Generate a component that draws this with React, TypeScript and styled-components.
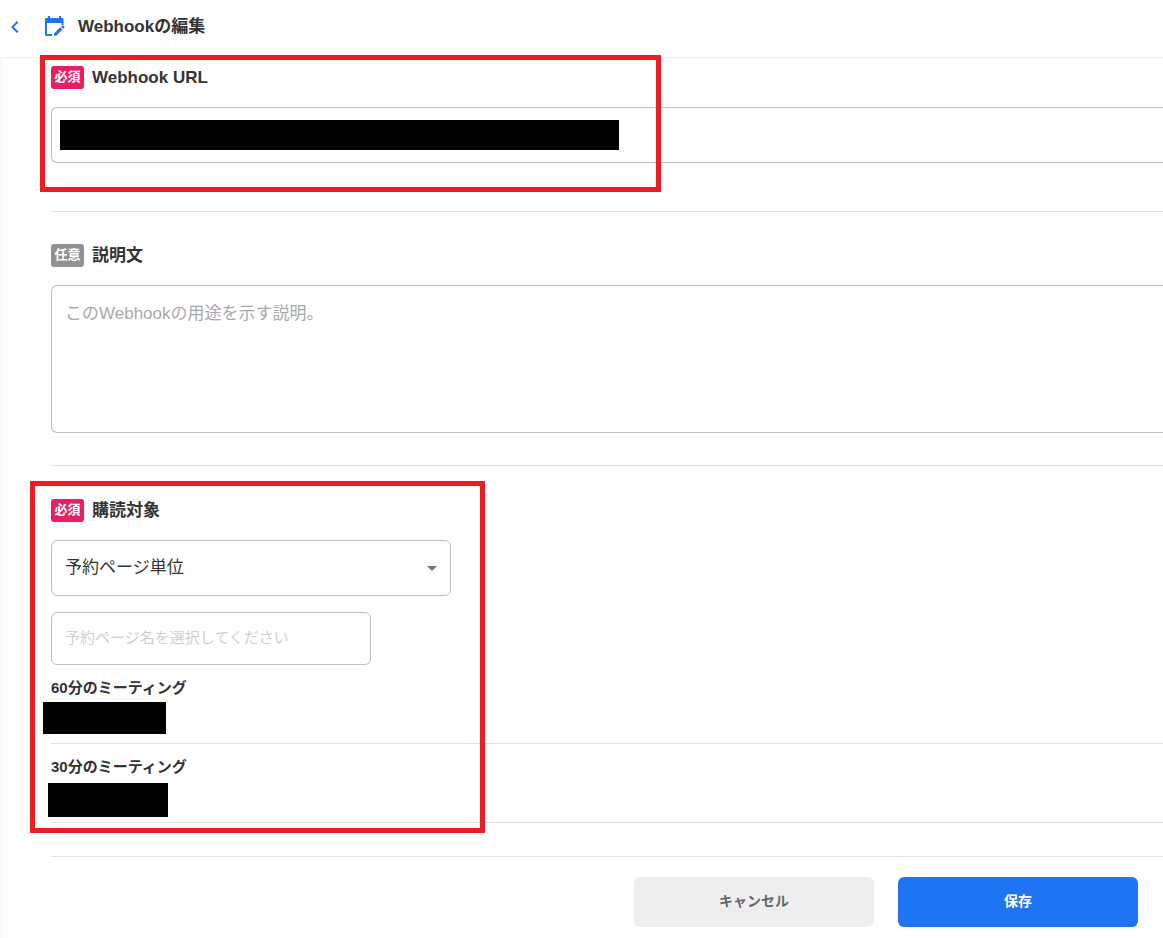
import React from 'react';
import styled, { createGlobalStyle, css } from 'styled-components';
import { MdArrowDropDown, MdChevronLeft } from 'react-icons/md';

const GlobalStyle = createGlobalStyle`
  *, *::before, *::after { box-sizing: border-box; }
  body {
    margin: 0;
    background: #fff;
    color: #333;
    font-family: "Liberation Sans", "Noto Sans CJK JP", sans-serif;
    font-size: 17px;
    line-height: 24px;
  }
  button, input, select, textarea { font: inherit; color: inherit; }
`;

const Page = styled.div`
  display: flex;
  flex-direction: column;
  min-height: 100vh;
  overflow-x: hidden;
`;

const Header = styled.header`
  display: flex;
  align-items: center;
  height: 58px;
  padding: 0 3px 4px;
  border-bottom: 1px solid #eee;
  color: #1f74f2;
`;

const BackButton = styled.button`
  display: flex;
  margin: 0 18px 0 0;
  padding: 0;
  border: 0;
  background: none;
  color: #1f74f2;
  cursor: pointer;
`;

const Title = styled.h1`
  margin: 0 0 0 12px;
  color: #333;
  font-size: 17px;
  line-height: 24px;
`;

const Form = styled.form`
  flex: 1;
  padding-left: 48px;
  border-left: 3px solid #f8f9fe;
`;

const Section = styled.section<{ $top: number; $bottom: number }>`
  position: relative;
  display: flex;
  flex-direction: column;
  padding: ${(p) => p.$top}px 0 ${(p) => p.$bottom}px;
  border-bottom: 1px solid #e4e4e4;
`;

const LabelRow = styled.div`
  display: flex;
  align-items: flex-start;
  gap: 8px;
  height: 24px;
  margin-bottom: 17px;
`;

const Badge = styled.span<{ $required?: boolean }>`
  width: 33px;
  padding-bottom: 2px;
  border-radius: 3px;
  background: ${(p) => (p.$required ? '#e91e63' : '#919191')};
  color: #fff;
  font-size: 13px;
  font-weight: 700;
  line-height: 21px;
  text-align: center;
`;

const Label = styled.label`
  font-weight: 700;
  line-height: 23px;
`;

const box = css`
  display: block;
  margin: 0;
  border: 1px solid #bfbfbf;
  border-radius: 6px;
  background: #fff;
  outline: none;
`;

const wideBox = css`
  ${box}
  width: 100%;
  border-right: 0;
  border-radius: 6px 0 0 6px;
`;

const UrlField = styled.div`
  position: relative;
`;

const UrlInput = styled.input`
  ${wideBox}
  height: 56px;
  padding: 0 13px;
`;

const Description = styled.textarea`
  ${wideBox}
  height: 148px;
  padding: 16px 13px;
  resize: none;
  &::placeholder { color: #a9a9a9; opacity: 1; }
`;

const SelectField = styled.div`
  position: relative;
  width: 400px;
  max-width: 100%;
  margin-bottom: 16px;

  svg {
    position: absolute;
    top: 16px;
    right: 7px;
    color: #757575;
    pointer-events: none;
  }
`;

const Select = styled.select`
  ${box}
  width: 100%;
  height: 56px;
  padding: 0 32px 0 13px;
  appearance: none;
`;

const PageInput = styled.input`
  ${box}
  width: 320px;
  max-width: 100%;
  height: 53px;
  padding: 0 13px 2px;
  font-size: 15px;
  &::placeholder { color: #cfcfcf; opacity: 1; }
`;

const MeetingList = styled.ul`
  margin: 0;
  padding: 0;
  list-style: none;
`;

const Meeting = styled.li`
  position: relative;
  height: 79px;
  padding-top: 12px;
  border-bottom: 1px solid #e2e2e2;
  font-size: 15px;
  font-weight: 700;
  line-height: 22px;
`;

type Rect = { $left: number; $top: number; $width: number; $height: number };

const Overlay = styled.div<Rect>`
  position: absolute;
  left: ${(p) => p.$left}px;
  top: ${(p) => p.$top}px;
  width: ${(p) => p.$width}px;
  height: ${(p) => p.$height}px;
  pointer-events: none;
`;

const Redaction = styled(Overlay)`
  background: #000;
`;

const Highlight = styled(Overlay)`
  border: 5px solid #ee1c25;
`;

const Actions = styled.div`
  display: flex;
  justify-content: flex-end;
  gap: 24px;
  padding: 20px 25px 11px 0;
`;

const ActionButton = styled.button<{ $primary?: boolean }>`
  width: 240px;
  height: 50px;
  padding: 0 0 2px;
  border: 0;
  border-radius: 6px;
  background: ${(p) => (p.$primary ? '#1f74f2' : '#eee')};
  color: ${(p) => (p.$primary ? '#fff' : '#666')};
  font-size: 14px;
  font-weight: 700;
  cursor: pointer;
`;

/* Calendar sheet with a pencil over its lower right corner */
function CalendarEditIcon() {
  return (
    <svg width="21" height="22" viewBox="0 0 21 22" fill="currentColor" aria-hidden="true">
      <path d="M3 0h2v2h9V0h2v2h1.200a1.300 1.300 0 0 1 1.300 1.300V9h-2V7H2v11h5v2H1.500A1.500 1.500 0 0 1 0 18.500V3.300A1.300 1.300 0 0 1 1.300 2H3z" />
      <path d="M9 17.500l6.200-6.200 2.300 2.300-6.200 6.200H9zM16 10.500l1-1a.7.7 0 0 1 1 0l1.300 1.300a.7.7 0 0 1 0 1l-1 1z" />
    </svg>
  );
}

export default function App() {
  return (
    <Page>
      <GlobalStyle />
      <Header>
        <BackButton type="button" aria-label="戻る">
          <MdChevronLeft size={24} />
        </BackButton>
        <CalendarEditIcon />
        <Title>Webhookの編集</Title>
      </Header>
      <Form onSubmit={(e) => e.preventDefault()}>
        <Section $top={8} $bottom={48}>
          <LabelRow>
            <Badge $required>必須</Badge>
            <Label htmlFor="url">Webhook URL</Label>
          </LabelRow>
          <UrlField>
            <UrlInput id="url" type="url" />
            <Redaction $left={9} $top={13} $width={559} $height={30} />
          </UrlField>
          <Highlight $left={-11} $top={-3} $width={621} $height={137} />
        </Section>

        <Section $top={32} $bottom={32}>
          <LabelRow>
            <Badge>任意</Badge>
            <Label htmlFor="description">説明文</Label>
          </LabelRow>
          <Description id="description" placeholder="このWebhookの用途を示す説明。" />
        </Section>

        <Section $top={33} $bottom={33}>
          <LabelRow>
            <Badge $required>必須</Badge>
            <Label htmlFor="target">購読対象</Label>
          </LabelRow>
          <SelectField>
            <Select id="target">
              <option>予約ページ単位</option>
            </Select>
            <MdArrowDropDown size={24} />
          </SelectField>
          <PageInput
            type="text"
            aria-label="予約ページ名"
            placeholder="予約ページ名を選択してください"
          />
          <MeetingList>
            <Meeting>
              60分のミーティング
              <Redaction $left={-8} $top={37} $width={123} $height={32} />
            </Meeting>
            <Meeting>
              30分のミーティング
              <Redaction $left={-3} $top={39} $width={120} $height={34} />
            </Meeting>
          </MeetingList>
          <Highlight $left={-21} $top={15} $width={455} $height={352} />
        </Section>

        <Actions>
          <ActionButton type="button">キャンセル</ActionButton>
          <ActionButton type="submit" $primary>
            保存
          </ActionButton>
        </Actions>
      </Form>
    </Page>
  );
}
